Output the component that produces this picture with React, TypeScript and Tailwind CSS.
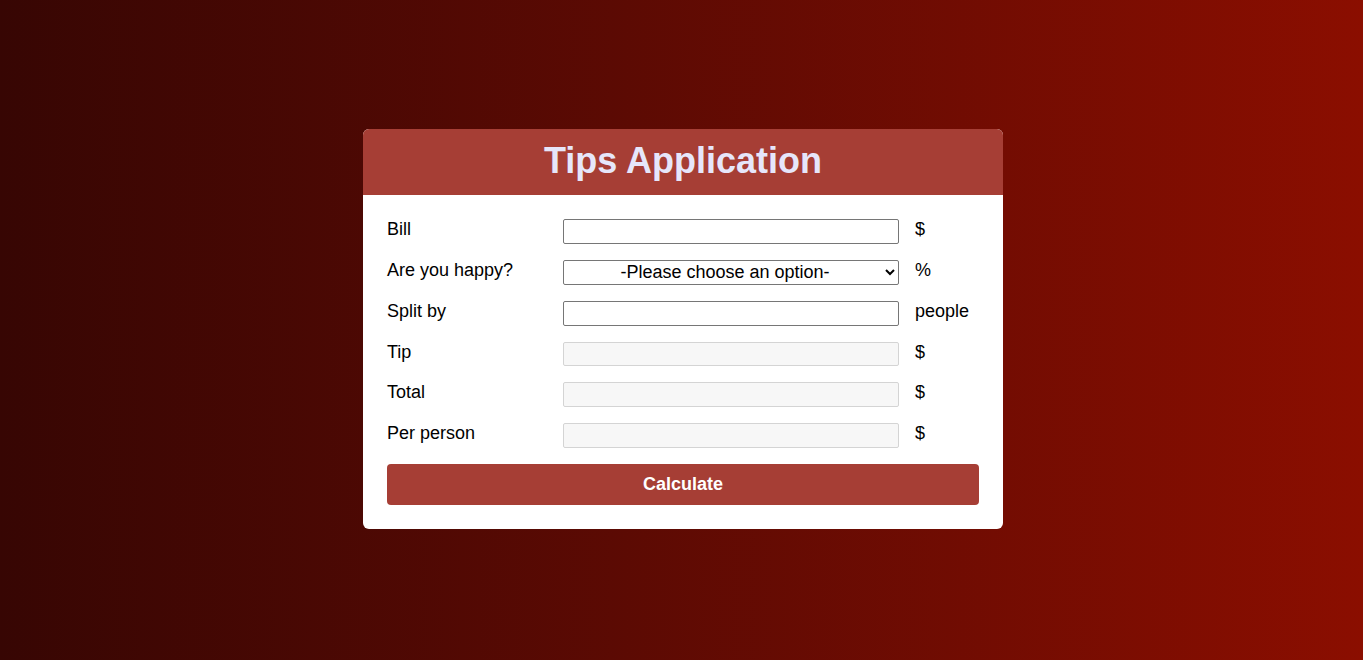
import { useState } from 'react';

const rows = [
  { label: 'Bill', unit: '$', kind: 'input' },
  { label: 'Are you happy?', unit: '%', kind: 'select' },
  { label: 'Split by', unit: 'people', kind: 'input' },
  { label: 'Tip', unit: '$', kind: 'output' },
  { label: 'Total', unit: '$', kind: 'output' },
  { label: 'Per person', unit: '$', kind: 'output' },
];

export default function App() {
  const [happy, setHappy] = useState('');

  return (
    <div className="min-h-screen w-full flex items-center justify-center bg-linear-to-r from-[#370603] to-[#8b0e00] font-['Liberation_Sans',Arial,sans-serif]">
      <div className="w-[640px] ml-[3px] mt-[-2px] bg-white rounded-md overflow-hidden">
        <div className="bg-[#a63e35] h-[66px] flex items-center justify-center">
          <h1 className="text-[36px] font-bold text-[#e6e6fa] leading-none -mt-[2px]">Tips Application</h1>
        </div>
        <div className="p-6">
          <div className="grid grid-cols-[160px_336px_64px] gap-x-4 gap-y-4 text-[18px] text-black">
            {rows.map((row) => (
              <div key={row.label} className="contents">
                <div className="leading-[21px]">{row.label}</div>
                {row.kind === 'select' ? (
                  <select
                    value={happy}
                    onChange={(e) => setHappy(e.target.value)}
                    className="h-[24.8px] w-full border border-[#767676] rounded-[2px] bg-white text-[18px] [text-align-last:center] leading-none"
                  >
                    <option value="">-Please choose an option-</option>
                    <option value="30">Very happy - 30%</option>
                    <option value="20">Happy - 20%</option>
                    <option value="10">Ok - 10%</option>
                  </select>
                ) : row.kind === 'input' ? (
                  <input
                    type="text"
                    className="h-[24.8px] w-full border border-[#767676] rounded-[2px] bg-white px-1 text-[16px]"
                  />
                ) : (
                  <input
                    type="text"
                    disabled
                    className="h-[24.8px] w-full border border-[#d4d4d4] rounded-[2px] bg-[#f7f7f7] px-1 text-[16px]"
                  />
                )}
                <div className="leading-[21px]">{row.unit}</div>
              </div>
            ))}
          </div>
          <button className="mt-4 w-full h-[41px] rounded-[4px] bg-[#a63e35] text-white text-[18px] font-bold">
            Calculate
          </button>
        </div>
      </div>
    </div>
  );
}
